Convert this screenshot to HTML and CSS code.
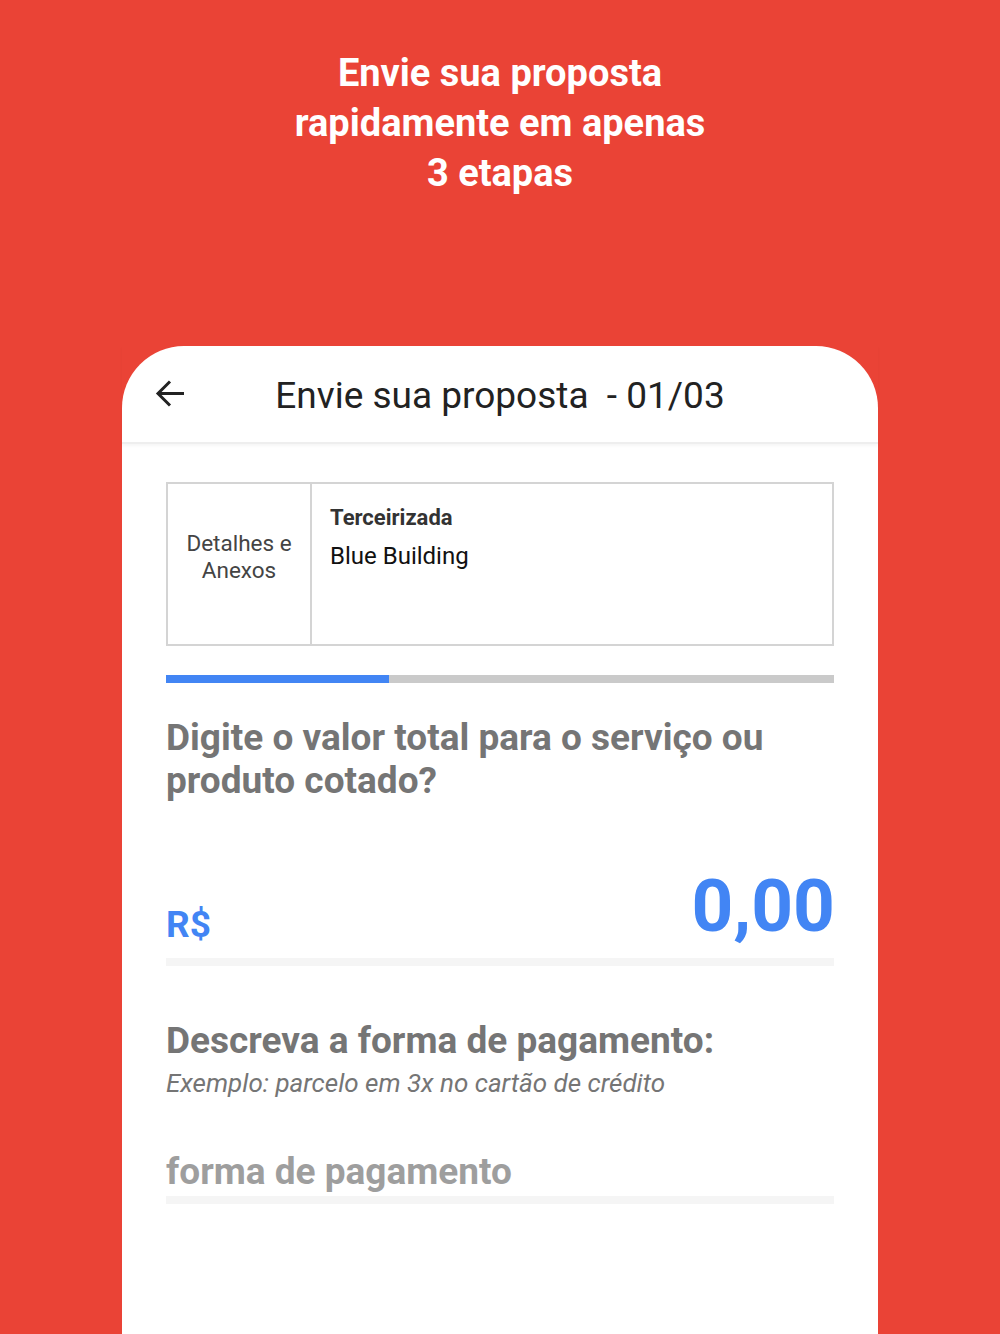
FILE: index.html
```html
<!DOCTYPE html>
<html lang="pt-BR">
<head>
  <meta charset="UTF-8" />
  <meta name="viewport" content="width=device-width, initial-scale=1.0"/>
  <title>Envie sua proposta</title>
  <link rel="stylesheet" href="styles.css">
</head>
<body>

  <h1 class="promo">Envie sua proposta<br>rapidamente em apenas<br>3 etapas</h1>

  <div class="phone">
    <div class="topbar">
      <svg class="back" width="30" height="27" viewBox="0 0 30 27">
        <path d="M29 13.5H3 M15 1.5L3 13.5 15 25.5" fill="none" stroke="#222" stroke-width="3"/>
      </svg>
      <div class="title">Envie sua proposta&nbsp; - 01/03</div>
    </div>

    <div class="content">
      <div class="info">
        <div class="info-tab">Detalhes e<br>Anexos</div>
        <div class="info-body">
          <p class="info-label">Terceirizada</p>
          <p class="info-name">Blue Building</p>
        </div>
      </div>

      <div class="progress"><div class="progress-fill" style="width: 33.4%"></div></div>

      <h2 class="question">Digite o valor total para o serviço ou produto cotado?</h2>

      <div class="amount">
        <span class="currency">R$</span>
        <span class="value">0,00</span>
      </div>
      <div class="line"></div>

      <h2 class="question q-pay">Descreva a forma de pagamento:</h2>
      <p class="hint">Exemplo: parcelo em 3x no cartão de crédito</p>

      <div class="field">forma de pagamento</div>
      <div class="line"></div>
    </div>
  </div>

</body>
</html>
```

FILE: styles.css
```css
* { margin: 0; padding: 0; box-sizing: border-box; }
body {
  font-family: Roboto, 'Noto Sans', sans-serif;
  background: #ea4336;
  color: #333;
  height: 1334px;
  overflow: hidden;
}

.promo {
  padding-top: 48px;
  text-align: center;
  color: #fff;
  font-size: 38px;
  font-weight: bold;
  line-height: 50px;
}

.phone {
  width: 756px;
  min-height: 988px;
  margin: 148px auto 0;
  background: #fff;
  border-radius: 62px 62px 0 0;
}

.topbar {
  position: relative;
  height: 98px;
  display: flex;
  align-items: center;
  justify-content: center;
  border-bottom: 2px solid #eee;
  box-shadow: 0 2px 3px rgba(0,0,0,0.04);
}

.back {
  position: absolute;
  left: 33px;
  top: 34px;
}

.title {
  font-size: 37px;
  color: #222;
  padding-top: 2px;
}

.content {
  padding: 38px 44px 0;
}

.info {
  display: flex;
  height: 164px;
  border: 2px solid #d4d4d4;
}

.info-tab {
  width: 144px;
  border-right: 2px solid #d4d4d4;
  display: flex;
  align-items: center;
  justify-content: center;
  padding-bottom: 14px;
  text-align: center;
  font-size: 22.5px;
  line-height: 27px;
  color: #444;
}

.info-body {
  padding: 22px 18px;
}

.info-label {
  font-size: 22px;
  font-weight: bold;
  color: #333;
  line-height: 24px;
}

.info-name {
  margin-top: 12px;
  font-size: 24px;
  color: #111;
  line-height: 28px;
}

.progress {
  margin-top: 29px;
  height: 8px;
  background: #cacaca;
}

.progress-fill {
  height: 100%;
  background: #4285f4;
}

.question {
  margin-top: 33px;
  font-size: 37px;
  line-height: 43px;
  font-weight: bold;
  color: #757575;
}

.amount {
  display: flex;
  justify-content: space-between;
  align-items: flex-end;
  margin-top: 64px;
  color: #4285f4;
  font-weight: bold;
}

.currency {
  font-size: 37px;
  line-height: 40px;
  padding-bottom: 1px;
}

.value {
  font-size: 73px;
  line-height: 80px;
  margin-right: -1px;
}

.line {
  height: 8px;
  background: #f5f5f5;
}

.amount + .line {
  margin-top: 12px;
}

.q-pay {
  margin-top: 53px;
}

.hint {
  font-size: 26px;
  font-style: italic;
  color: #757575;
  line-height: 34px;
  margin-top: 4px;
}

.field {
  margin-top: 50px;
  font-size: 37px;
  font-weight: bold;
  color: #9e9e9e;
  line-height: 44px;
}

.field + .line {
  margin-top: 2px;
}
```
